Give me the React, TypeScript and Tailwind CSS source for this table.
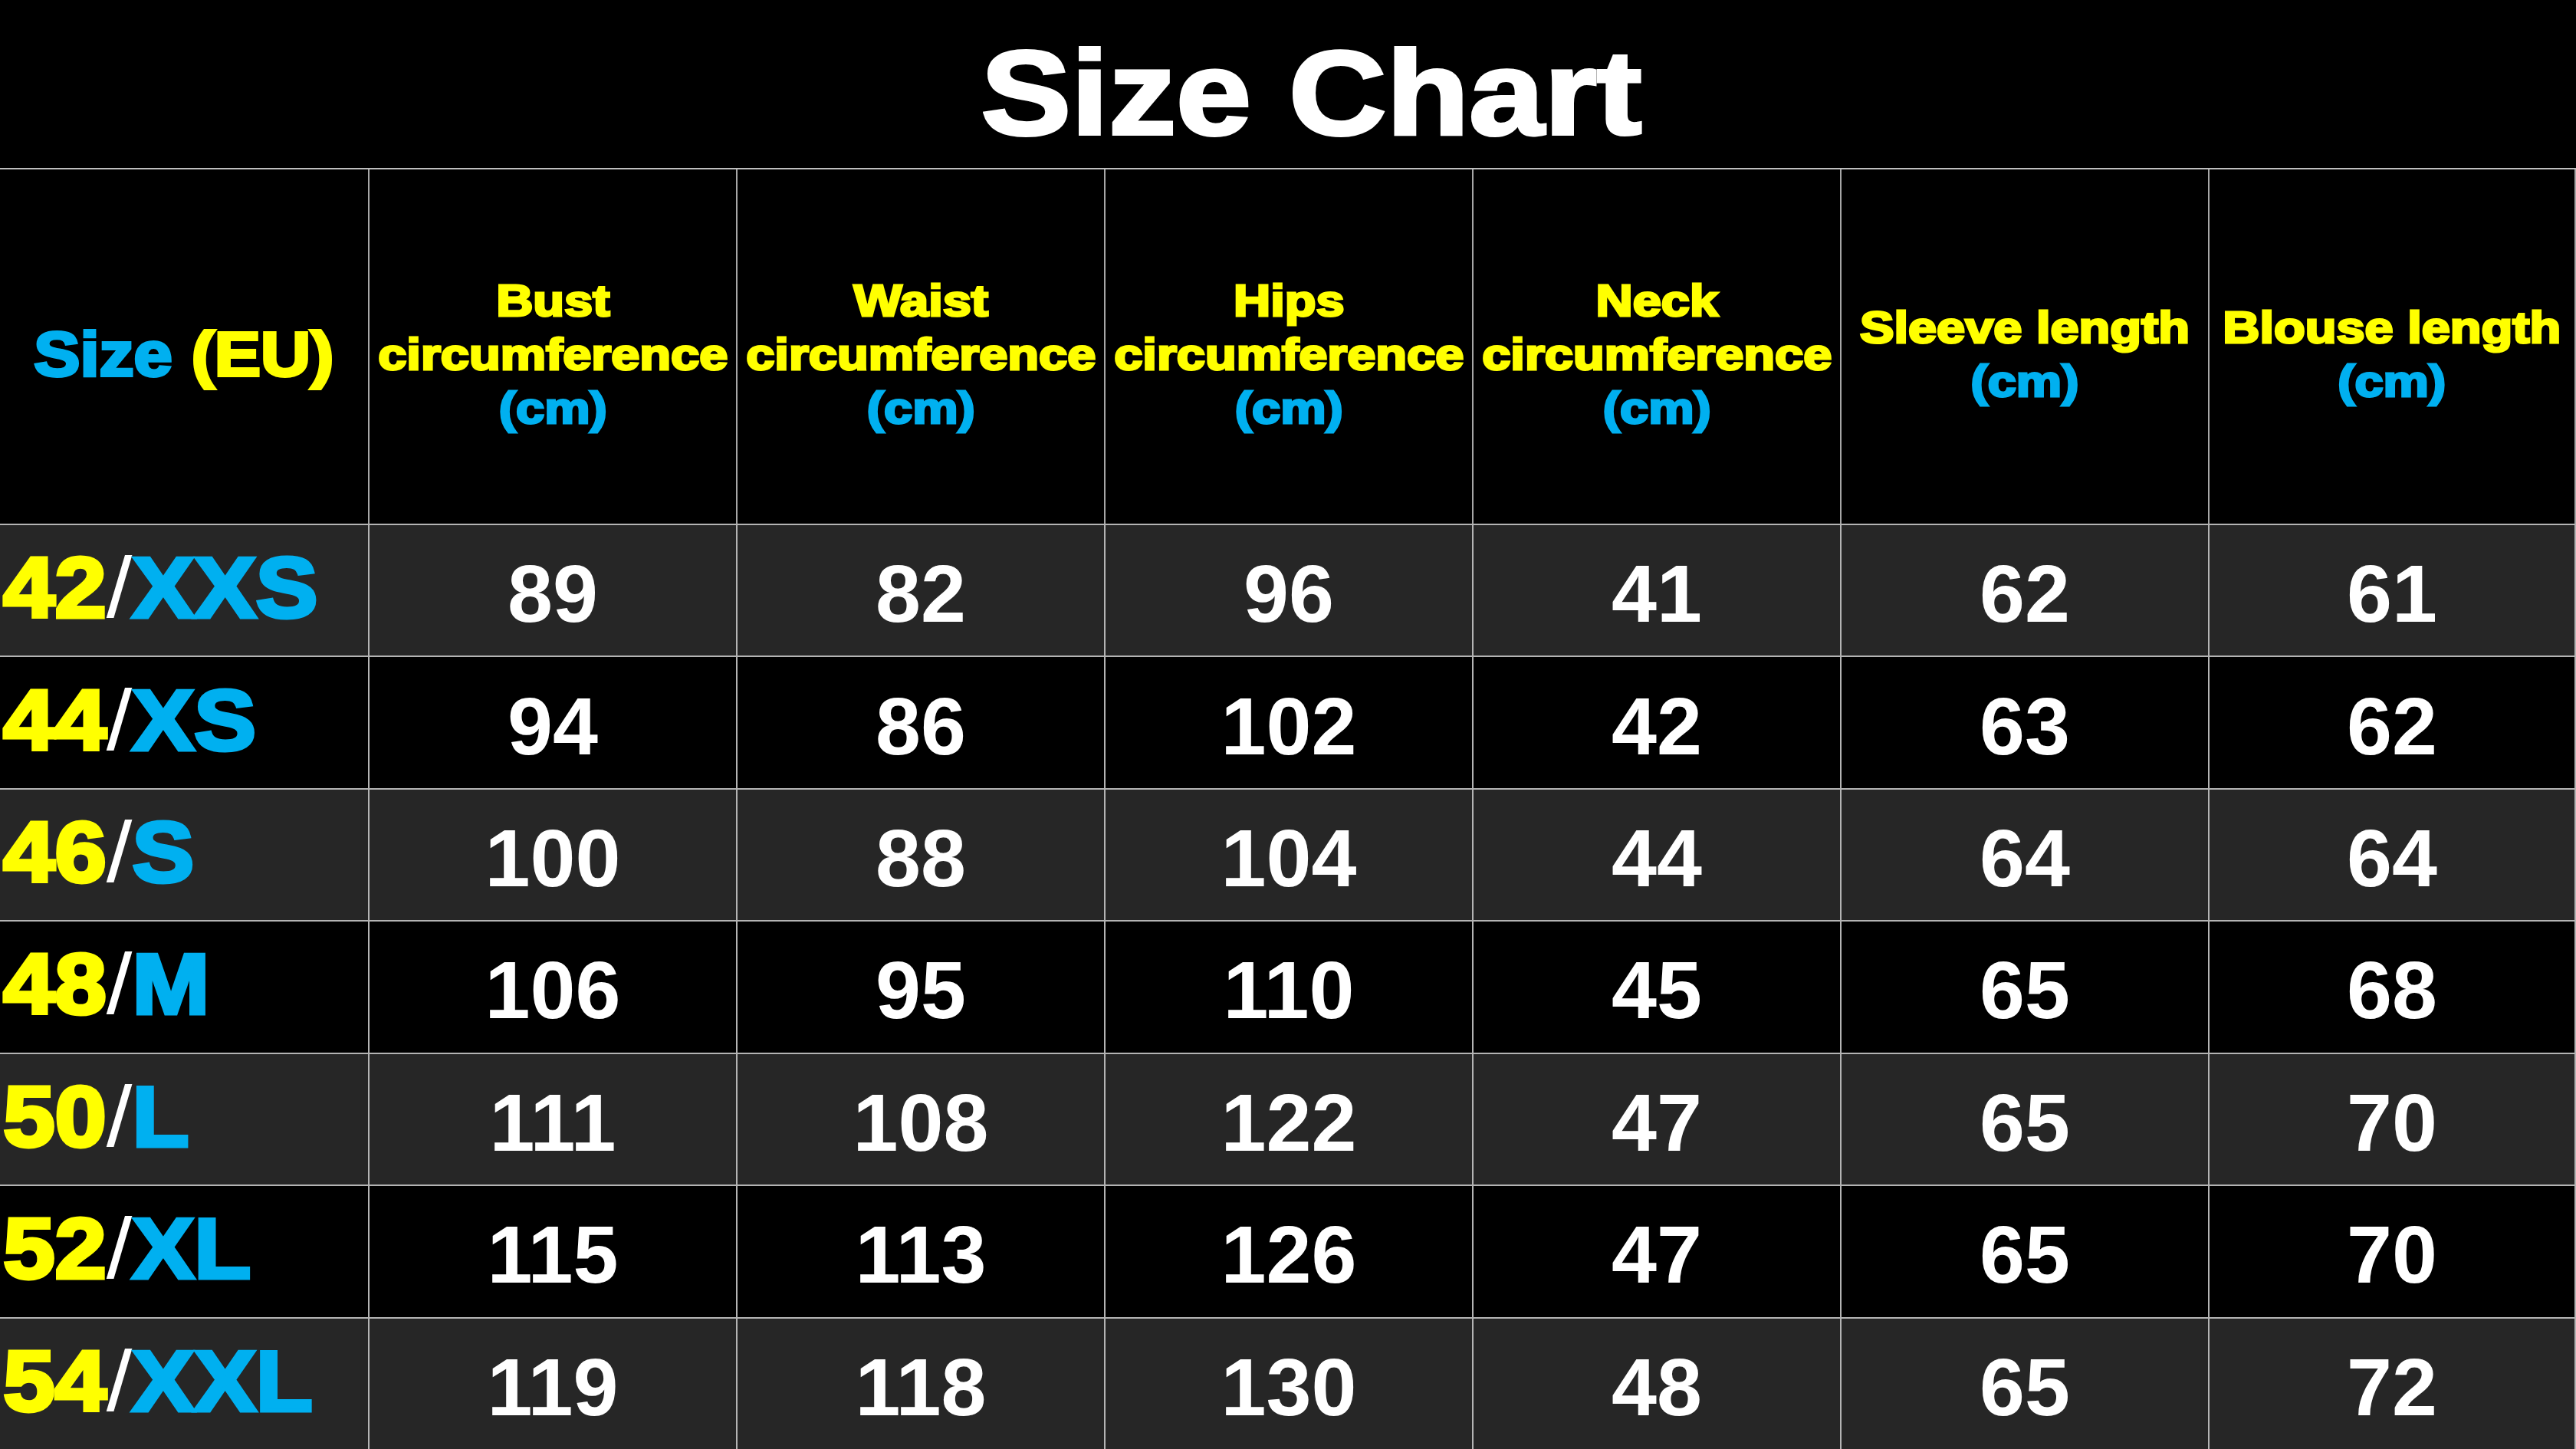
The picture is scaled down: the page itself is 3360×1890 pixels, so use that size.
import React from "react";

type Row = {
  eu: string;
  letter: string;
  values: number[];
};

const rows: Row[] = [
  { eu: "42", letter: "XXS", values: [89, 82, 96, 41, 62, 61] },
  { eu: "44", letter: "XS", values: [94, 86, 102, 42, 63, 62] },
  { eu: "46", letter: "S", values: [100, 88, 104, 44, 64, 64] },
  { eu: "48", letter: "M", values: [106, 95, 110, 45, 65, 68] },
  { eu: "50", letter: "L", values: [111, 108, 122, 47, 65, 70] },
  { eu: "52", letter: "XL", values: [115, 113, 126, 47, 65, 70] },
  { eu: "54", letter: "XXL", values: [119, 118, 130, 48, 65, 72] },
];

// header columns after the size column
const columns = [
  { lines: ["Bust", "circumference"] },
  { lines: ["Waist", "circumference"] },
  { lines: ["Hips", "circumference"] },
  { lines: ["Neck", "circumference"] },
  { lines: ["Sleeve length"] },
  { lines: ["Blouse length"] },
];

const HeaderCell = ({ lines, last }: { lines: string[]; last: boolean }) => (
  <div
    className={`flex items-center justify-center border-l-2 border-[#a6a6a6] pt-[20px] ${
      last ? "border-r-2" : ""
    }`}
  >
    <div className="flex origin-center scale-x-[1.15] flex-col items-center whitespace-nowrap text-[58px] font-bold leading-[70px] [-webkit-text-stroke:3px_currentColor]">
      {lines.map((line) => (
        <span key={line} className="text-[#ffff00]">
          {line}
        </span>
      ))}
      <span className="text-[#00b0f0]">(cm)</span>
    </div>
  </div>
);

const SizeLabel = ({ eu, letter }: { eu: string; letter: string }) => (
  <div className="flex origin-left scale-x-[1.08] items-baseline whitespace-nowrap pb-[6px] pl-[4px] text-[112px] leading-none">
    <span className="font-bold text-[#ffff00] [-webkit-text-stroke:5px_currentColor]">{eu}</span>
    <span className="font-normal text-white">/</span>
    <span className="font-bold text-[#00b0f0] [-webkit-text-stroke:5px_currentColor]">{letter}</span>
  </div>
);

export default function App() {
  return (
    <div className="flex h-[1890px] w-[3360px] flex-col overflow-hidden bg-black font-['Liberation_Sans',Arial,sans-serif]">
      <div className="flex h-[219px] shrink-0 items-center justify-center pl-[60px] pt-[22px]">
        <h1 className="scale-x-[1.13] text-[156px] font-bold leading-none text-white [-webkit-text-stroke:4px_currentColor]">
          Size Chart
        </h1>
      </div>

      <div className="grid flex-1 grid-cols-[repeat(7,480px)] grid-rows-[462px_repeat(7,1fr)] border-t-2 border-[#bfbfbf]">
        <div className="flex items-center justify-center pt-[20px]">
          <div className="scale-x-[1.1] whitespace-nowrap text-[82px] font-bold leading-none [-webkit-text-stroke:4px_currentColor]">
            <span className="text-[#00b0f0]">Size</span>{" "}
            <span className="text-[#ffff00]">(EU)</span>
          </div>
        </div>
        {columns.map((col, i) => (
          <HeaderCell key={i} lines={col.lines} last={i === columns.length - 1} />
        ))}

        {rows.map((row, r) => {
          const bg = r % 2 === 0 ? "bg-[#262626]" : "bg-black";
          return (
            <React.Fragment key={row.eu}>
              <div className={`flex items-center border-t-2 border-[#b4b4b4] ${bg}`}>
                <SizeLabel eu={row.eu} letter={row.letter} />
              </div>
              {row.values.map((v, c) => (
                <div
                  key={c}
                  className={`flex items-center justify-center border-l-2 border-t-2 border-[#b4b4b4] pt-2 text-[106px] font-bold leading-none text-white ${bg} ${
                    c === row.values.length - 1 ? "border-r-2" : ""
                  }`}
                >
                  {v}
                </div>
              ))}
            </React.Fragment>
          );
        })}
      </div>
    </div>
  );
}
